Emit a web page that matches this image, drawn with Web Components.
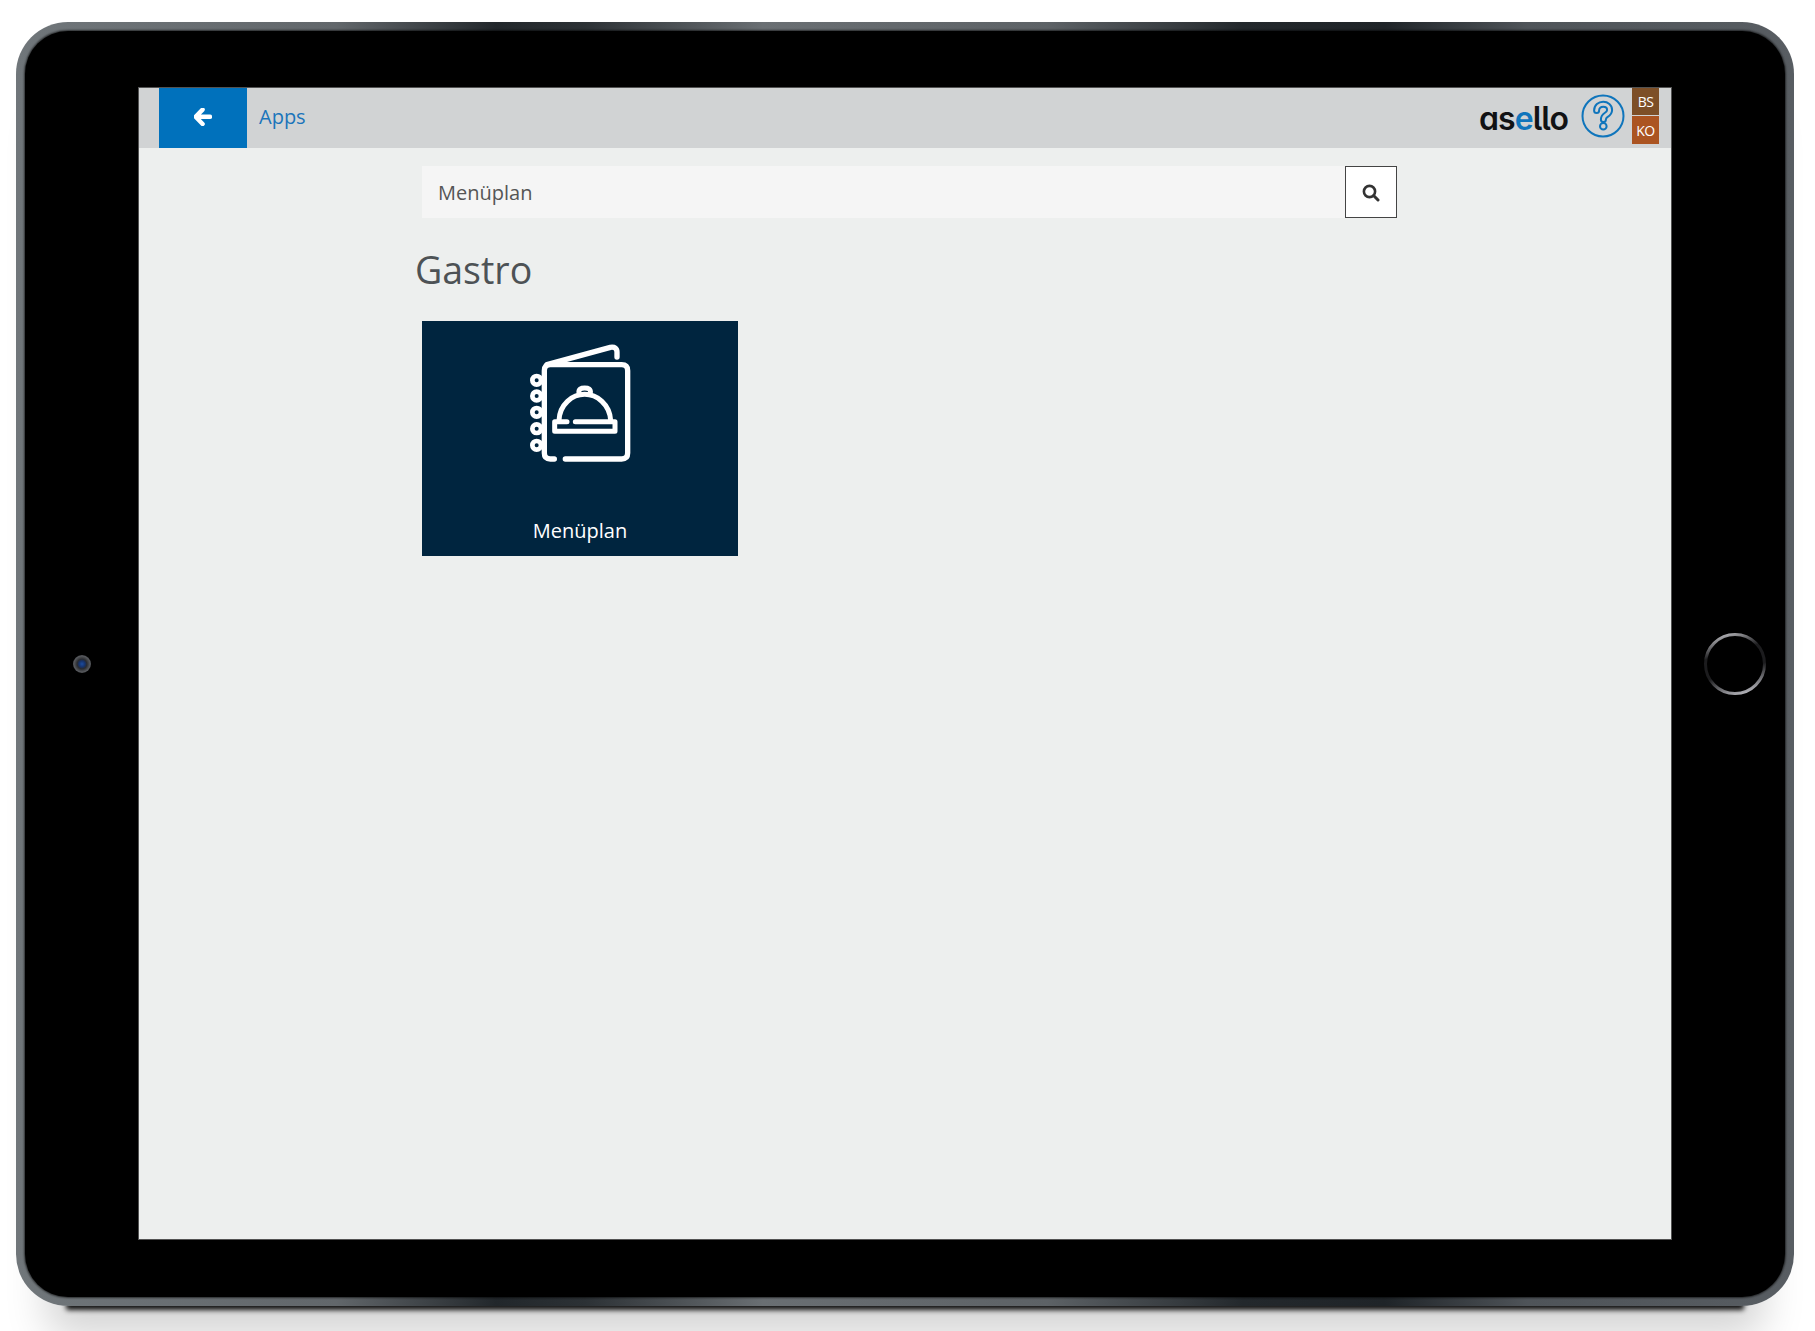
<!DOCTYPE html>
<html lang="de">
<head>
<meta charset="utf-8">
<title>Gastro</title>
<style>
  html, body { margin: 0; background: #fff; height: 1331px; overflow: hidden; font-family: "Open Sans", sans-serif; }
</style>
</head>
<body>
<tablet-frame>
  <app-header title-text="Apps">
    <brand-logo></brand-logo>
    <help-icon></help-icon>
    <user-tags></user-tags>
  </app-header>
  <search-bar>Menüplan</search-bar>
  <app-section heading="Gastro">
    <app-tile>Menüplan</app-tile>
  </app-section>
</tablet-frame>

<script>
// device shell: bezel, camera, home button
class TabletFrame extends HTMLElement {
  constructor() {
    super();
    this.attachShadow({ mode: 'open' }).innerHTML = `
    <style>
      :host {
        display: block;
        width: 1778px;
        height: 1284px;
        margin: 22px 0 0 16px;
        box-sizing: border-box;
        padding: 9px;
        border-radius: 52px;
        background: linear-gradient(90deg, #70767a 0%, #62676b 18%, #22272b 27%, #2c3135 32%, #6a6f73 42%, #5d6266 58%, #23282c 69%, #1f2428 77%, #4f5459 85%, #585d62 100%);
        box-shadow: 0 54px 5px -50px rgba(0,0,0,.9), 0 60px 40px -30px rgba(0,0,0,.17);
      }
      .bezel {
        height: 100%;
        box-sizing: border-box;
        background: #000;
        border-radius: 43px;
        padding: 57px 0 58px;
        display: grid;
        grid-template-columns: 114px 1fr 114px;
        box-shadow: 0 0 2px 1px rgba(0,0,0,.6);
      }
      .side { display: flex; align-items: center; justify-content: center; }
      .side.home { padding-left: 14px; }
      .camera {
        width: 18px; height: 18px; border-radius: 50%;
        background: radial-gradient(circle at 50% 50%, #1c4c9e 0%, #16326a 24%, #2a2c30 38%, #55575b 62%, #35373b 100%);
      }
      .screen {
        background: #edefee;
        box-shadow: 0 0 0 1px rgba(128,128,128,.65);
        display: flex;
        flex-direction: column;
        min-width: 0;
      }
      .content { padding: 18px 0 0 283px; width: 975px; }
    </style>
    <div class="bezel">
      <div class="side"><div class="camera"></div></div>
      <div class="screen">
        <slot name="header"></slot>
        <div class="content"><slot></slot></div>
      </div>
      <div class="side home">
        <svg width="66" height="66" viewBox="0 0 66 66">
          <defs>
            <linearGradient id="ring" x1="0.35" y1="0" x2="0.65" y2="1">
              <stop offset="0" stop-color="#a8a8ac"/>
              <stop offset=".3" stop-color="#1c1c1e"/>
              <stop offset=".62" stop-color="#1c1c1e"/>
              <stop offset="1" stop-color="#b0b0b6"/>
            </linearGradient>
          </defs>
          <circle cx="33" cy="33" r="29.5" fill="none" stroke="url(#ring)" stroke-width="3"/>
        </svg>
      </div>
    </div>`;
  }
  connectedCallback() {
    const h = this.querySelector('app-header');
    if (h) h.setAttribute('slot', 'header');
  }
}

class AppHeader extends HTMLElement {
  constructor() {
    super();
    this.attachShadow({ mode: 'open' }).innerHTML = `
    <style>
      :host {
        display: flex;
        align-items: stretch;
        height: 60px;
        background: #d1d3d4;
        padding: 0 12px 0 20px;
        font: 20px "Open Sans", sans-serif;
      }
      .back {
        width: 88px;
        background: #0071bc;
        display: flex; align-items: center; justify-content: center;
        padding-bottom: 2px; box-sizing: border-box;
      }
      .title { margin-left: 12px; color: #1b75bb; line-height: 57px; }
      .right { margin-left: auto; display: flex; align-items: flex-start; }
    </style>
    <div class="back">
      <svg width="18" height="18" viewBox="0 0 18 18">
        <path d="M8.6 1.6 1.6 8.8l7 7.2M2.6 8.8H16" fill="none" stroke="#fff" stroke-width="4.4" stroke-linecap="round" stroke-linejoin="round"/>
      </svg>
    </div>
    <div class="title"></div>
    <div class="right"><slot></slot></div>`;
  }
  connectedCallback() {
    this.shadowRoot.querySelector('.title').textContent = this.getAttribute('title-text');
  }
}

class BrandLogo extends HTMLElement {
  constructor() {
    super();
    this.attachShadow({ mode: 'open' }).innerHTML = `
    <style>
      :host {
        display: block;
        margin: 8px 13px 0 0;
        font: 600 32px/46px Inter, sans-serif;
        font-feature-settings: "cv11" 1, "ss02" 1;
        letter-spacing: -.9px;
        color: #111214;
      }
      b { font-weight: 600; color: #0f75bc; }
    </style>
    as<b>e</b>llo`;
  }
}

class HelpIcon extends HTMLElement {
  constructor() {
    super();
    this.attachShadow({ mode: 'open' }).innerHTML = `
    <style>
      :host { display: block; width: 44px; height: 44px; margin: 6px 7px 0 0; }
      svg { display: block; }
    </style>
    <svg width="44" height="44" viewBox="0 0 44 44" fill="none" stroke-linecap="round">
      <circle cx="22" cy="22" r="20.5" stroke="#0f75bc" stroke-width="2"/>
      <path d="M15.6 16.5c0-3.800 3-6.200 6.600-6.200s6.400 2.300 6.400 5.600c0 2.800-1.800 4-3.600 5.200-1.800 1.200-2.600 2-2.600 4.400" stroke="#0f75bc" stroke-width="7"/>
      <path d="M15.6 16.5c0-3.800 3-6.200 6.600-6.200s6.400 2.300 6.400 5.600c0 2.800-1.800 4-3.600 5.200-1.800 1.200-2.600 2-2.600 4.400" stroke="#d1d3d4" stroke-width="3"/>
      <circle cx="22.3" cy="32.3" r="3.300" stroke="#0f75bc" stroke-width="2"/>
    </svg>`;
  }
}

class UserTags extends HTMLElement {
  constructor() {
    super();
    this.attachShadow({ mode: 'open' }).innerHTML = `
    <style>
      :host {
        display: flex; flex-direction: column; gap: 1px;
        width: 27px;
        font: 14px "Open Sans", sans-serif; color: #fff; text-align: center;
        letter-spacing: -.5px;
      }
      div { height: 27px; line-height: 27px; }
      .bs { background: #7d4f27; }
      .ko { height: 28px; line-height: 30px; background: #ab5421; }
    </style>
    <div class="bs">BS</div>
    <div class="ko">KO</div>`;
  }
}

class SearchBar extends HTMLElement {
  constructor() {
    super();
    this.attachShadow({ mode: 'open' }).innerHTML = `
    <style>
      :host {
        display: flex;
        height: 52px;
        font: 20px/54px "Open Sans", sans-serif;
        color: #555;
      }
      .field { flex: 1; background: #f5f5f5; padding-left: 16px; }
      .btn {
        width: 52px; box-sizing: border-box; padding-top: 2px;
        background: #fff; border: 1px solid #444;
        display: flex; align-items: center; justify-content: center;
      }
    </style>
    <div class="field"><slot></slot></div>
    <div class="btn">
      <svg width="18" height="18" viewBox="0 0 18 18" fill="none" stroke="#333">
        <circle cx="7.5" cy="7.5" r="5.6" stroke-width="2.6"/>
        <path d="M11.8 11.8 16 16" stroke-width="3" stroke-linecap="round"/>
      </svg>
    </div>`;
  }
}

class AppSection extends HTMLElement {
  constructor() {
    super();
    this.attachShadow({ mode: 'open' }).innerHTML = `
    <style>
      :host { display: block; }
      h2 {
        margin: 0 0 0 -7px;
        padding-top: 27px;
        height: 103px;
        box-sizing: border-box;
        font: 400 37.5px/50px "Open Sans", sans-serif;
        color: #4d5255;
      }
      .grid { display: flex; }
    </style>
    <h2></h2>
    <div class="grid"><slot></slot></div>`;
  }
  connectedCallback() {
    this.shadowRoot.querySelector('h2').textContent = this.getAttribute('heading');
  }
}

class AppTile extends HTMLElement {
  constructor() {
    super();
    this.attachShadow({ mode: 'open' }).innerHTML = `
    <style>
      :host {
        display: flex; flex-direction: column; align-items: center;
        width: 316px; height: 235px;
        background: #00253f;
        color: #fff;
        font: 20px/28px "Open Sans", sans-serif;
      }
      svg { display: block; margin-top: 22px; }
      .label { margin-top: 54px; }
    </style>
    <svg width="105" height="120" viewBox="353 100 315 360" fill="none" stroke="#fff" stroke-width="16" stroke-linecap="round" stroke-linejoin="round">
      <!-- back cover -->
      <path d="M410 165 600 113Q620 110 620 128V142"/>
      <!-- book -->
      <path d="M432 448H420Q402 448 402 430V183Q402 165 420 165H634Q652 165 652 183V430Q652 448 634 448H465"/>
      <!-- spiral -->
      <g stroke-width="14">
        <circle cx="379" cy="212" r="13"/>
        <circle cx="379" cy="259" r="13"/>
        <circle cx="379" cy="308" r="13"/>
        <circle cx="379" cy="357" r="13"/>
        <circle cx="379" cy="407" r="13"/>
      </g>
      <!-- cloche -->
      <g stroke-width="15">
        <path d="M446 332C448 284 486 254 523 254S598 284 601 332"/>
        <path d="M506 250C504 238 512 235 523 235S542 238 540 250"/>
        <path d="M470 336H433V365H614V336H495"/>
      </g>
    </svg>
    <div class="label"><slot></slot></div>`;
  }
}

customElements.define('tablet-frame', TabletFrame);
customElements.define('app-header', AppHeader);
customElements.define('brand-logo', BrandLogo);
customElements.define('help-icon', HelpIcon);
customElements.define('user-tags', UserTags);
customElements.define('search-bar', SearchBar);
customElements.define('app-section', AppSection);
customElements.define('app-tile', AppTile);
</script>
</body>
</html>
